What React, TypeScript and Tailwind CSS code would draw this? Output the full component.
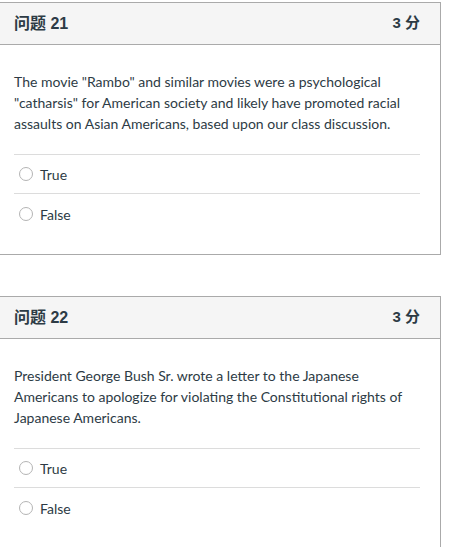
const questions = [
  {
    id: 21,
    points: 3,
    text: 'The movie "Rambo" and similar movies were a psychological "catharsis" for American society and likely have promoted racial assaults on Asian Americans, based upon our class discussion.',
  },
  {
    id: 22,
    points: 3,
    text: 'President George Bush Sr. wrote a letter to the Japanese Americans to apologize for violating the Constitutional rights of Japanese Americans.',
  },
];

function Answer({ label, first }: { label: string; first?: boolean }) {
  return (
    <div className={`flex h-10 items-center border-b border-[#dcdcdc] ${first ? 'border-t' : ''} last:border-b-0`}>
      <span className="ml-[5px] h-[14px] w-[14px] rounded-full border border-[#b4b4b4] bg-white" />
      <span className="ml-[7px] text-[14px] text-[#2d3b45]">{label}</span>
    </div>
  );
}

function Question({ id, points, text }: { id: number; points: number; text: string }) {
  return (
    <div className="w-[441px] border border-l-0 border-[#aaaaaa] bg-white">
      <div className="flex h-[42px] items-center justify-between border-b border-[#aaaaaa] bg-[#f5f5f5] pl-[14px] pr-[20px] font-['Liberation_Sans','Noto_Sans_CJK_SC',sans-serif] text-[16px] font-bold text-[#2d3b45]">
        <span>问题 {id}</span>
        <span className="text-[15px]">{points} 分</span>
      </div>
      <div className="pb-5 pl-[14px] pr-[20px] pt-[26px]">
        <p className="mb-5 text-[14px] leading-[21px] text-[#2d3b45]">{text}</p>
        <Answer label="True" first />
        <Answer label="False" />
      </div>
    </div>
  );
}

export default function App() {
  return (
    <div className="min-h-[547px] bg-white pt-[2px] font-['Lato','Noto_Sans_CJK_SC',sans-serif]">
      <div className="flex flex-col gap-[41px]">
        {questions.map((q) => (
          <Question key={q.id} {...q} />
        ))}
      </div>
    </div>
  );
}
